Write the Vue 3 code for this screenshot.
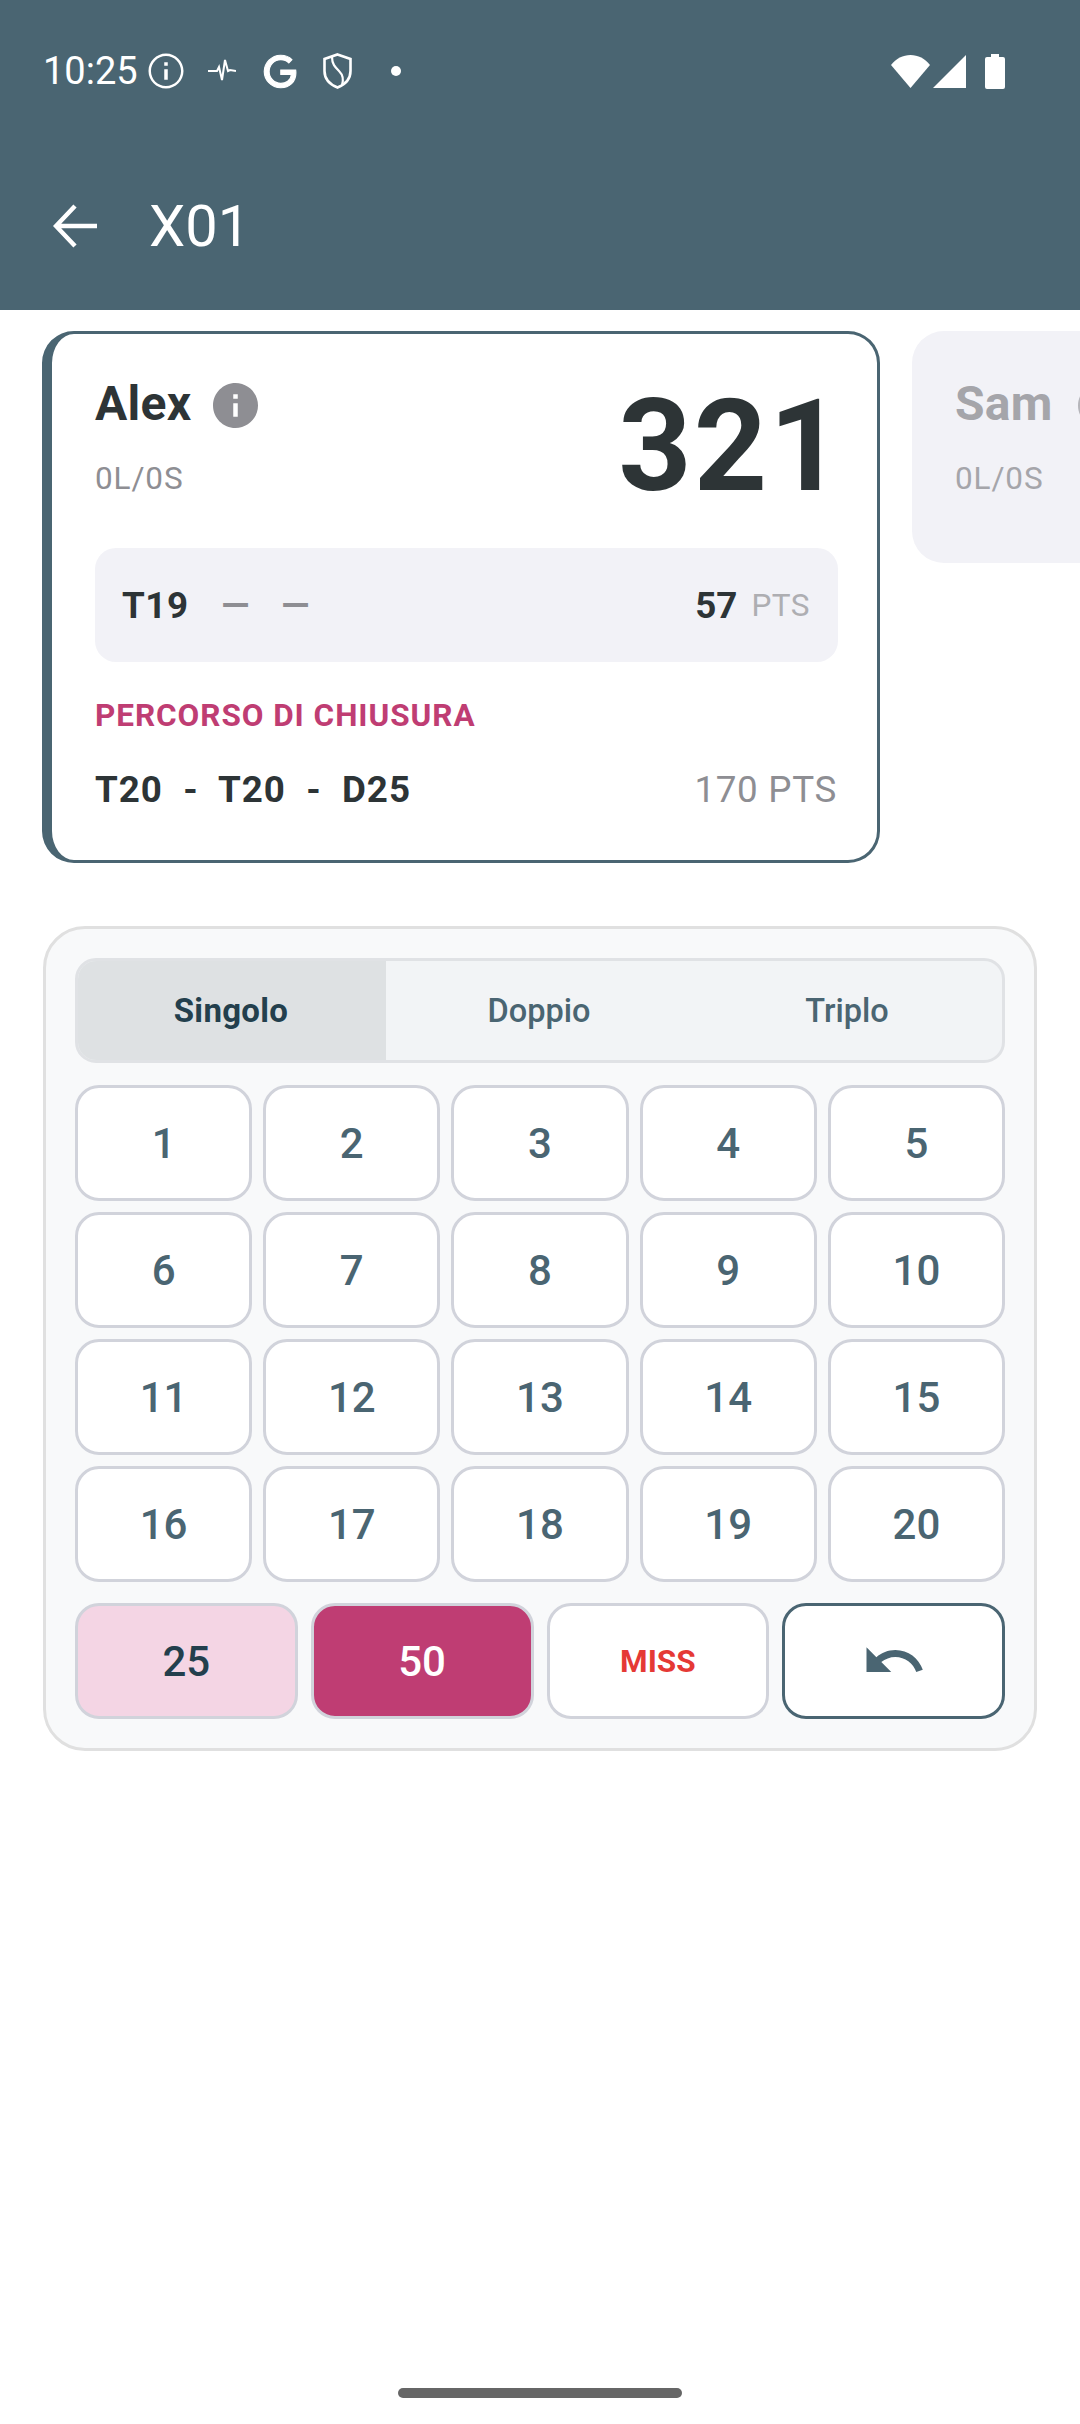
<template>
  <div class="screen">
    <header class="appbar">
      <div class="status">
        <span class="time">10:25</span>
        <svg class="st-info" viewBox="0 0 24 24" fill="#fff"><path d="M11 7h2v2h-2zm0 4h2v6h-2zm1-9C6.48 2 2 6.48 2 12s4.48 10 10 10 10-4.48 10-10S17.52 2 12 2zm0 18.6c-4.74 0-8.6-3.86-8.6-8.6S7.26 3.4 12 3.4s8.6 3.86 8.6 8.6-3.86 8.6-8.6 8.6z" /></svg>
        <svg class="st-pulse" viewBox="0 0 28 24" fill="none" stroke="#fff" stroke-width="2"><path d="M0 12h9l2-4 3 13 3-20 3 11 2-1 6 1" /></svg>
        <svg class="st-g" viewBox="0 0 24 24" fill="#fff" stroke="#fff" stroke-width=".7"><path d="M21.35 11.1h-9.17v2.73h6.51c-.33 3.81-3.5 5.44-6.5 5.44C8.36 19.27 5 16.25 5 12c0-4.1 3.2-7.27 7.2-7.27 3.09 0 4.9 1.97 4.9 1.97L19 4.72S16.56 2 12.1 2C6.42 2 2 6.8 2 12c0 5.05 4.13 10 10.22 10 5.35 0 9.25-3.67 9.25-9.09 0-1.15-.12-1.81-.12-1.81z" /></svg>
        <svg class="st-shield" viewBox="0 0 29 36" fill="none" stroke="#fff" stroke-width="2.6"><path d="M14.5 1.5 27.5 6v12c0 8-5.5 13.500-13 16.500C7 31.500 1.500 26 1.500 18V6z" /><path d="M9 4c0 7 3 10 7 14 4 4 5 8 3 14" stroke-width="2.2" /></svg>
        <span class="st-dot"></span>
        <div class="st-right">
          <svg class="st-wifi" viewBox="0 0 39 33" fill="#fff"><path d="M0 10C5 3.500 12 0 19.500 0S34 3.500 39 10L19.500 33z" /></svg>
          <svg class="st-signal" viewBox="0 0 33 33" fill="#fff"><path d="M33 0v33H0z" /></svg>
          <svg class="st-battery" viewBox="0 0 20 35" fill="#fff"><path d="M6 0h8v3h4a2 2 0 0 1 2 2v28a2 2 0 0 1-2 2H2a2 2 0 0 1-2-2V5a2 2 0 0 1 2-2h4z" /></svg>
        </div>
      </div>
      <div class="toolbar">
        <svg class="back" viewBox="0 0 44 44" fill="none" stroke="#fff" stroke-width="4.500"><path d="M44 22H3M22 2 3 22l19 20" /></svg>
        <span class="title">X01</span>
      </div>
    </header>

    <section class="players">
      <article class="card active">
        <div class="card-head">
          <div class="who">
            <div class="name-row">
              <span class="name">Alex</span>
              <svg class="info" viewBox="2 2 20 20" fill="#8e8e93"><path :d="infoPath" /></svg>
            </div>
            <div class="legs">0L/0S</div>
          </div>
          <div class="score">321</div>
        </div>
        <div class="throws">
          <span class="dart">T19</span>
          <span class="dash">—</span>
          <span class="dash">—</span>
          <span class="throw-total">57</span>
          <span class="throw-unit">PTS</span>
        </div>
        <div class="route-label">PERCORSO DI CHIUSURA</div>
        <div class="route">
          <span class="route-darts">T20&nbsp; -&nbsp; T20&nbsp; -&nbsp; D25</span>
          <span class="route-pts">170 PTS</span>
        </div>
      </article>

      <article class="card idle">
        <div class="name-row">
          <span class="name">Sam</span>
          <svg class="info" viewBox="2 2 20 20" fill="#b5b5ba"><path :d="infoPath" /></svg>
        </div>
        <div class="legs">0L/0S</div>
      </article>
    </section>

    <section class="pad">
      <div class="tabs">
        <button v-for="m in modes" :key="m" class="tab" :class="{ on: m === mode }" @click="mode = m">{{ m }}</button>
      </div>
      <div class="numbers">
        <button v-for="n in 20" :key="n" class="key">{{ n }}</button>
      </div>
      <div class="specials">
        <button class="key bull">25</button>
        <button class="key bullseye">50</button>
        <button class="key miss">MISS</button>
        <button class="key undo">
          <svg viewBox="0 0 24 24" fill="#4a6572"><path d="M12.5 8c-2.65 0-5.05.99-6.9 2.6L2 7v9h9l-3.62-3.62c1.39-1.16 3.16-1.88 5.12-1.88 3.54 0 6.55 2.31 7.6 5.5l2.37-.78C21.08 11.03 17.15 8 12.5 8z" /></svg>
        </button>
      </div>
    </section>

    <div class="home-bar"></div>
  </div>
</template>

<script setup>
import { ref } from 'vue'

const infoPath = 'M12 2C6.48 2 2 6.48 2 12s4.48 10 10 10 10-4.48 10-10S17.52 2 12 2zm1 15h-2v-6h2v6zm0-8h-2V7h2v2z'
const modes = ['Singolo', 'Doppio', 'Triplo']
const mode = ref('Singolo')
</script>

<style>
html,
body {
  margin: 0;
  background: #fff;
}
</style>

<style scoped>
.screen {
  width: 1080px;
  height: 2424px;
  overflow: hidden;
  display: flex;
  flex-direction: column;
  font-family: Roboto, "Liberation Sans", sans-serif;
  color: #2d3436;
  background: #fff;
}
.appbar {
  background: #4a6572;
  color: #fff;
  height: 310px;
  flex: none;
}
.status {
  height: 142px;
  display: flex;
  align-items: center;
  padding: 0 75px 0 43px;
  box-sizing: border-box;
}
.time {
  font-size: 38px;
}
.st-info {
  width: 42px;
  height: 42px;
  margin-left: 7px;
}
.st-pulse {
  width: 28px;
  height: 24px;
  margin-left: 21px;
}
.st-g {
  width: 39px;
  height: 39px;
  margin-left: 25px;
}
.st-shield {
  width: 29px;
  height: 36px;
  margin-left: 23px;
}
.st-dot {
  width: 10px;
  height: 10px;
  border-radius: 50%;
  background: #fff;
  margin-left: 39px;
}
.st-right {
  margin-left: auto;
  display: flex;
  align-items: center;
}
.st-wifi {
  width: 39px;
  height: 33px;
}
.st-signal {
  width: 33px;
  height: 33px;
  margin-left: 3px;
}
.st-battery {
  width: 20px;
  height: 35px;
  margin-left: 19px;
}
.toolbar {
  height: 168px;
  box-sizing: border-box;
  padding: 0 0 0 53px;
  display: flex;
  align-items: center;
}
.back {
  width: 44px;
  height: 44px;
}
.title {
  font-size: 57.75px;
  margin-left: 52px;
}

.players {
  display: flex;
  align-items: flex-start;
  gap: 32px;
  padding: 21px 0 0 42px;
  flex: none;
}
.card {
  flex: none;
  box-sizing: border-box;
  border-radius: 32px;
}
.active {
  width: 838px;
  background: #fff;
  border: 3px solid #4a6572;
  border-left-width: 10.500px;
  padding: 42px 39px 49px 43px;
}
.idle {
  width: 400px;
  height: 232px;
  background: #f2f2f7;
  padding: 45px 0 0 43px;
}
.card-head {
  display: flex;
  justify-content: space-between;
  align-items: flex-start;
  height: 132px;
  margin-bottom: 40px;
}
.name-row {
  display: flex;
  align-items: center;
  height: 56px;
}
.name {
  font-size: 48px;
  line-height: 56px;
  font-weight: 700;
  letter-spacing: 0.3px;
}
.info {
  width: 45px;
  height: 45px;
  margin-left: 21px;
  margin-top: 2px;
}
.legs {
  font-size: 31.500px;
  line-height: 37px;
  letter-spacing: 0.9px;
  margin-top: 28px;
  color: #8e8e93;
}
.idle .name,
.idle .legs {
  color: #a5a5aa;
}
.idle .info {
  margin-left: 25px;
}
.score {
  font-size: 128px;
  line-height: 128px;
  font-weight: 700;
  letter-spacing: 2px;
  margin: 6px -6.500px 0 0;
}
.throws {
  height: 114px;
  border-radius: 21px;
  background: #f2f2f7;
  display: flex;
  align-items: center;
  padding: 0 28px 0 27px;
  font-size: 36.750px;
}
.dart {
  font-weight: 700;
  letter-spacing: 0.6px;
  margin-right: 32.500px;
}
.dash {
  color: #8e8e93;
  font-weight: 700;
  margin-right: 32px;
}
.throw-total {
  margin-left: auto;
  font-weight: 700;
}
.throw-unit {
  margin-left: 14px;
  font-size: 31.500px;
  letter-spacing: 0.5px;
  color: #aeaeb2;
}
.route-label {
  margin-top: 35px;
  font-size: 31.500px;
  line-height: 37px;
  font-weight: 700;
  letter-spacing: 0.95px;
  color: #bf3d73;
}
.route {
  margin-top: 34px;
  display: flex;
  justify-content: space-between;
  font-size: 36.750px;
  line-height: 43px;
}
.route-darts {
  font-weight: 700;
  letter-spacing: 1px;
}
.route-pts {
  color: #8e8e93;
  letter-spacing: 0.7px;
  margin-right: 1px;
}

.pad {
  flex: none;
  box-sizing: border-box;
  width: 994px;
  height: 825px;
  margin: 63px 0 0 43px;
  padding: 29px;
  background: #f8f9fa;
  border: 3px solid #e0e0e0;
  border-radius: 42px;
}
.tabs {
  display: flex;
  height: 105px;
  box-sizing: border-box;
  border: 3px solid #e0e2e5;
  border-radius: 21px;
  overflow: hidden;
  background: #f2f4f6;
}
.tab {
  flex: 1 1 0;
  min-width: 0;
  border: 0;
  padding: 0 2px 0 0;
  background: transparent;
  font-family: inherit;
  font-size: 32.500px;
  font-weight: 500;
  color: #4a6572;
}
.tab.on {
  background: #dee1e3;
  font-size: 33px;
  font-weight: 700;
  letter-spacing: 0.3px;
  color: #233f4d;
}
.numbers {
  display: grid;
  grid-template-columns: repeat(5, 1fr);
  grid-auto-rows: 116px;
  gap: 11px;
  margin-top: 22px;
}
.specials {
  display: grid;
  grid-template-columns: repeat(4, 1fr);
  grid-auto-rows: 116px;
  gap: 13px;
  margin-top: 21px;
}
.key {
  box-sizing: border-box;
  border: 3px solid #d1d3db;
  border-radius: 24px;
  background: #fff;
  padding: 0;
  font-family: inherit;
  font-size: 42px;
  font-weight: 500;
  color: #4a6572;
  display: flex;
  align-items: center;
  justify-content: center;
}
.bull {
  background: #f4d5e4;
  color: #233f4d;
}
.bullseye {
  background: #bf3d73;
  color: #fff;
}
.miss {
  font-size: 31.500px;
  font-weight: 700;
  color: #e53935;
}
.undo {
  border-color: #4a6572;
}
.undo svg {
  width: 66px;
  height: 66px;
}
.home-bar {
  width: 284px;
  height: 10px;
  border-radius: 5px;
  background: #666;
  margin: auto 0 26px 398px;
  flex: none;
}
</style>
